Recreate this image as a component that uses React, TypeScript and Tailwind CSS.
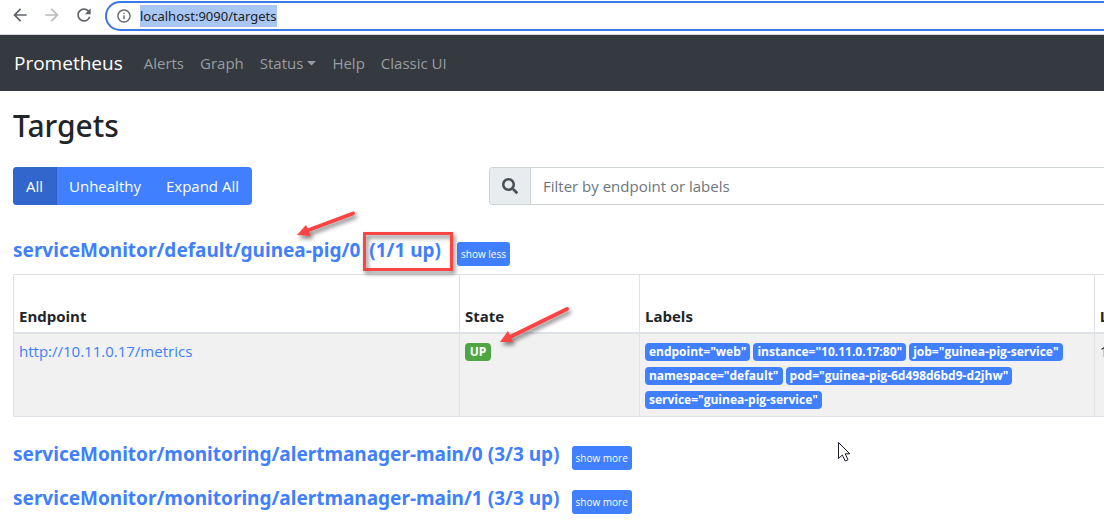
import { FaSearch } from "react-icons/fa";
import { MdArrowBack, MdArrowForward, MdRefresh, MdInfoOutline } from "react-icons/md";

const navLink = "text-[15px] leading-6 text-[#9a9da0]";

function BrowserBar() {
  return (
    <div className="flex h-[35px] items-center border-b border-[#d5d7da] bg-white pb-1 pl-[10px]">
      <div className="flex items-center gap-3">
        <button type="button" aria-label="Back" className="text-[#5f6368]">
          <MdArrowBack size={20} />
        </button>
        <button type="button" aria-label="Forward" className="text-[#babcbe]">
          <MdArrowForward size={20} />
        </button>
        <button type="button" aria-label="Reload" className="text-[#5f6368]">
          <MdRefresh size={20} />
        </button>
      </div>
      <div className="ml-[11px] mt-px flex h-[30px] min-w-0 flex-1 items-center gap-2 rounded-l-full border-2 border-r-0 border-[#3b78e7] pl-[9px]">
        <MdInfoOutline size={16} className="text-[#5f6368]" />
        <div className="bg-[#a8c7f5] pr-px font-['Noto_Sans',sans-serif] text-[13px] leading-[22px] text-[#202124]">localhost:9090/targets</div>
      </div>
    </div>
  );
}

function NavBar() {
  return (
    <nav className="flex h-14 items-center bg-[#343a40] pl-[14px]">
      <a href="#home" className="mr-[21px] text-[19px] leading-[30px] text-white">Prometheus</a>
      <div className="flex items-center gap-4">
        <a href="#alerts" className={navLink}>Alerts</a>
        <a href="#graph" className={navLink}>Graph</a>
        <a href="#status" className="flex items-center gap-1 text-[15px] leading-6 text-[#9a9da0]">
          Status
          <svg width="9" height="5" viewBox="0 0 9 5" fill="currentColor" aria-hidden="true">
            <path d="M0 0h9L4.5 4.5z" />
          </svg>
        </a>
        <a href="#help" className={navLink}>Help</a>
        <a href="#classic" className={navLink}>Classic UI</a>
      </div>
    </nav>
  );
}

function PoolHeading({ name, count, expanded = false }: { name: string; count: string; expanded?: boolean }) {
  return (
    <div className="flex h-6 items-center">
      <h3 className="font-['Noto_Sans',sans-serif] text-[19px] font-bold leading-6">
        <a href="#pool" className="text-[#407fff]">
          {name} <span className={expanded ? "px-1" : ""}>({count} up)</span>
        </a>
      </h3>
      <button type="button" className="ml-3 mt-[7px] h-6 rounded-[3px] bg-[#407fff] px-1 text-[10px] leading-4 text-white">
        {expanded ? "show less" : "show more"}
      </button>
    </div>
  );
}

function Label({ children }: { children: string }) {
  return (
    <span className="flex h-[18px] items-center whitespace-nowrap rounded bg-[#407fff] px-1 text-[12px] font-bold text-white">
      {children}
    </span>
  );
}

function TargetsTable() {
  const cell = "border border-[#dee2e6] px-[5px]";
  return (
    <table className="w-full table-fixed border-collapse text-left text-[15px] leading-6 text-[#212529]">
      <colgroup>
        <col className="w-[40.9%]" />
        <col className="w-[16.5%]" />
        <col className="w-[41.7%]" />
        <col />
      </colgroup>
      <thead>
        <tr className="h-[58px] align-bottom">
          {["Endpoint", "State", "Labels", "L"].map((title) => (
            <th key={title} className="border border-b-2 border-[#dee2e6] px-[5px] pb-1 font-bold last:border-r-0">{title}</th>
          ))}
        </tr>
      </thead>
      <tbody>
        <tr className="h-[84px] bg-[#f1f1f1] align-top">
          <td className={cell + " pt-[5px]"}>
            <a href="#metrics" className="text-[#407fff]">http://10.11.0.17/metrics</a>
          </td>
          <td className={cell + " pt-[9px]"}>
            <span className="flex h-[18px] w-[26px] items-center justify-center rounded bg-[#4fa544] text-[12px] font-bold text-white">UP</span>
          </td>
          <td className={cell + " pt-[9px]"}>
            <div className="flex flex-wrap gap-x-[3px] gap-y-[6px]">
              <Label>endpoint="web"</Label>
              <Label>instance="10.11.0.17:80"</Label>
              <Label>job="guinea-pig-service"</Label>
              <Label>namespace="default"</Label>
              <Label>pod="guinea-pig-6d498d6bd9-d2jhw"</Label>
              <Label>service="guinea-pig-service"</Label>
            </div>
          </td>
          <td className="border border-r-0 border-[#dee2e6] pl-[5px] pt-[5px]">1</td>
        </tr>
      </tbody>
    </table>
  );
}

function Annotations() {
  return (
    <svg className="pointer-events-none absolute left-0 top-0" width="900" height="480" viewBox="0 0 900 480" aria-hidden="true">
      <defs>
        <filter id="shadow" x="-20%" y="-20%" width="140%" height="150%">
          <feDropShadow dx="2" dy="3" stdDeviation="2" floodColor="#000" floodOpacity="0.5" />
        </filter>
      </defs>
      <g filter="url(#shadow)" fill="#fb4444" stroke="#fb4444">
        <path d="M353 213.5L306 231" strokeWidth="4" strokeLinecap="round" />
        <path d="M297 235L306 225L311 236z" stroke="none" />
        <path d="M567 309L510 337" strokeWidth="4" strokeLinecap="round" />
        <path d="M500 342L508 331L513 342z" stroke="none" />
        <rect x="364.5" y="233.5" width="87" height="36" fill="none" strokeWidth="3" />
      </g>
      <path d="M838.5 442.5V458.5L842.3 455L845.2 461L848 459.8L845.3 453.8H849.8z" fill="#fff" stroke="#1c1c28" strokeWidth="1" />
    </svg>
  );
}

export default function App() {
  return (
    <div className="relative min-h-screen overflow-x-clip bg-white font-['Open_Sans','Noto_Sans',sans-serif] text-[#212529]">
      <BrowserBar />
      <NavBar />
      <main className="pl-[13px] pt-4">
        <h1 className="font-['Noto_Sans',sans-serif] text-[30px] font-medium leading-[38px]">Targets</h1>
        <div className="mt-[22px] flex h-[38px]">
          <div className="w-[476px] shrink-0">
            <div className="inline-flex h-[38px] overflow-hidden rounded bg-[#407fff] text-[15px] text-white">
              <button type="button" className="w-11 border-r border-[#2f60bd] bg-[#3366cc]">All</button>
              <button type="button" className="px-3">Unhealthy</button>
              <button type="button" className="px-[13px]">Expand All</button>
            </div>
          </div>
          <div className="flex min-w-0 flex-1 overflow-hidden rounded-l border border-r-0 border-[#ced4da]">
            <label htmlFor="filter" aria-label="Filter" className="flex w-[41px] shrink-0 items-center justify-center border-r border-[#ced4da] bg-[#e9ecef] text-[#495057]">
              <FaSearch size={16} />
            </label>
            <input id="filter" type="text" placeholder="Filter by endpoint or labels" className="min-w-0 flex-1 px-3 text-[15px] outline-none placeholder:text-[#6c757d]" />
          </div>
        </div>
        <section className="mt-[33px]">
          <PoolHeading name="serviceMonitor/default/guinea-pig/0" count="1/1" expanded />
          <div className="mt-3">
            <TargetsTable />
          </div>
        </section>
        <section className="mt-[25px] flex flex-col gap-5 pb-4">
          <PoolHeading name="serviceMonitor/monitoring/alertmanager-main/0" count="3/3" />
          <PoolHeading name="serviceMonitor/monitoring/alertmanager-main/1" count="3/3" />
        </section>
      </main>
      <Annotations />
    </div>
  );
}
